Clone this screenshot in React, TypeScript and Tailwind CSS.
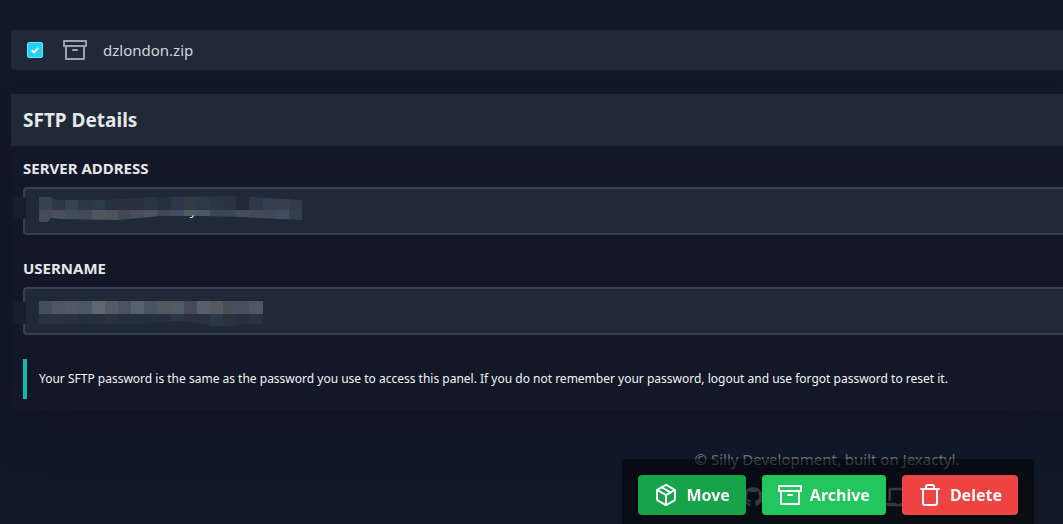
import type { ReactNode } from "react";
import { FiArchive, FiPackage, FiTrash } from "react-icons/fi";
import { FaGithub } from "react-icons/fa";

interface Mosaic {
  top: string[];
  bottom: string[];
  outline: string;
  patch: string;
  split: number;
  tail?: boolean;
}

const addressMosaic: Mosaic = {
  top: [
    "#364450", "#2f3644", "#36434f", "#2d3846", "#2d3b50", "#27323f", "#2a323e", "#29323d", "#2b3547", "#25323e",
    "#2e3649", "#323b43", "#2b394a", "#2b363f", "#2a3341", "#222a38", "#32364a", "#344154", "#383f50", "#323d47",
  ],
  bottom: [
    "#454b58", "#4b4f5c", "#414d5b", "#454a5a", "#4d5662", "#4b5559", "#454855", "#4a4e5a", "#4e5260", "#414850",
    "#454d65", "#4f5c60", "#4b5a60", "#3a475a", "#3c4953", "#414f60", "#474a55", "#3f4a58", "#434b60", "#333f49",
  ],
  outline: "M26 2H37L45 5H92L137 2L227 1L252 3L289 5V25L267 24L232 22L192 21H147L105 25L47 24L38 23L35 27H26Z",
  patch: "M0 2H13V24H9L0 22Z",
  split: 15,
  tail: true,
};

const usernameMosaic: Mosaic = {
  top: [
    "#43505c", "#4f5565", "#525867", "#4b5869", "#62666d", "#545b65", "#4c535f", "#585f6d", "#4a5263",
    "#53575f", "#505c64", "#44495c", "#575f6a", "#57585f", "#484f57", "#494f60", "#53565d",
  ],
  bottom: [
    "#2a333f", "#29343e", "#29303e", "#242f3d", "#252f3d", "#29323f", "#242f40", "#242f40", "#242f42",
    "#262f42", "#2b3748", "#2c3042", "#263142", "#283845", "#2a323b", "#28303f", "#293342",
  ],
  outline: "M26 6H250V29L235 29L215 31H200L188 29L175 27L160 26L150 28L120 29H26Z",
  patch: "M1 7H13V29H3L0 26V9Z",
  split: 19,
};

function Censored({ id, mosaic }: { id: string; mosaic: Mosaic }) {
  return (
    <svg aria-hidden="true" width="290" height="34" className="pointer-events-none absolute top-2 -left-2.5">
      <clipPath id={`${id}-clip`}>
        <path d={mosaic.outline} />
      </clipPath>
      <path d={mosaic.patch} fill="#182030" />
      <g clipPath={`url(#${id}-clip)`} shapeRendering="crispEdges">
        {mosaic.top.map((fill, i) => (
          <rect key={i} x={26 + i * 13.15} y="0" width="14" height={mosaic.split} fill={fill} />
        ))}
        {mosaic.bottom.map((fill, i) => (
          <rect key={i} x={26 + i * 13.15} y={mosaic.split} width="14" height="16" fill={fill} />
        ))}
      </g>
      {mosaic.tail && <path d="M177 22.5H179L180.5 20.5" fill="none" stroke="#e5e7eb" strokeWidth="1.2" />}
    </svg>
  );
}

function Field({ id, label, mosaic }: { id: string; label: string; mosaic: Mosaic }) {
  return (
    <div>
      <label htmlFor={id} className="block text-[15px] leading-[18px] font-bold text-gray-200 uppercase">
        {label}
      </label>
      <div className="relative mt-2.5">
        <input
          id={id}
          type="text"
          readOnly
          className="block h-12 w-full rounded-l border-2 border-r-0 border-[#374151] bg-[#1f2937] px-3.5 text-[15px] text-gray-200 outline-none"
        />
        <Censored id={id} mosaic={mosaic} />
      </div>
    </div>
  );
}

function ActionButton({ icon, color, children }: { icon: ReactNode; color: string; children: ReactNode }) {
  return (
    <button type="button" className={`flex h-10 items-center gap-2 rounded px-4 text-base font-bold text-gray-50 ${color}`}>
      {icon}
      {children}
    </button>
  );
}

export default function App() {
  return (
    <div className="relative min-h-screen overflow-hidden bg-[#111827] pt-[30px] pl-[11px] font-['Noto_Sans',sans-serif] text-gray-200">
      <div className="flex h-10 items-center rounded-l bg-[#1f2937] pl-4">
        <span className="relative flex">
          <input
            id="file-dzlondon"
            type="checkbox"
            defaultChecked
            className="size-4 appearance-none rounded-xs border border-[#67e8f9] bg-[#22d3ee]"
          />
          <svg viewBox="0 0 16 16" className="pointer-events-none absolute inset-0 size-4">
            <path d="M4.8 8.2l2.2 2.2 4.2-4.4" fill="none" stroke="#fff" strokeWidth="2" />
          </svg>
        </span>
        <label htmlFor="file-dzlondon" className="flex items-center gap-4 pl-5 text-[15px] leading-5 text-gray-300">
          <FiArchive className="size-6 text-[#9ca3af]" />
          dzlondon.zip
        </label>
      </div>

      <section className="mt-6 rounded-l bg-[#121827] shadow-2xl">
        <h2 className="flex h-13 items-center bg-[#1f2937] px-3 text-[19px] leading-6 font-bold">SFTP Details</h2>
        <div className="pt-[13px] pb-3 pl-3">
          <div className="flex flex-col gap-6">
            <Field id="sftp-address" label="Server Address" mosaic={addressMosaic} />
            <Field id="sftp-username" label="Username" mosaic={usernameMosaic} />
            <div className="flex h-10 items-center border-l-4 border-[#14b8a6] pl-3">
              <p className="text-xs text-gray-100">
                Your SFTP password is the same as the password you use to access this panel. If you do not remember your
                password, logout and use forgot password to reset it.
              </p>
            </div>
          </div>
        </div>
      </section>

      <footer className="mt-9 mr-[29px] ml-auto flex w-[414px] flex-col items-center text-[#6b7280]">
        <p className="text-[15px] leading-6">© Silly Development, built on Jexactyl.</p>
        <div className="mt-4 flex w-[168px] items-center justify-between">
          <FaGithub className="size-5" />
          <svg viewBox="0 0 30 24" className="h-5 w-[25px]" fill="currentColor">
            <path d="M5 1h20a2 2 0 0 1 2 2v14h-3V4H6v13H3V3a2 2 0 0 1 2-2zM0 19h12l1 1h4l1-1h12v1a3 3 0 0 1-3 3H3a3 3 0 0 1-3-3z" />
          </svg>
        </div>
      </footer>

      <div className="fixed right-[29px] bottom-0 flex gap-4 rounded-t bg-black/50 px-4 pt-4 pb-[9px]">
        <ActionButton color="bg-[#16a34a]" icon={<FiPackage className="size-6" />}>
          Move
        </ActionButton>
        <ActionButton color="bg-[#22c55e]" icon={<FiArchive className="size-6" />}>
          Archive
        </ActionButton>
        <ActionButton color="bg-[#ef4444]" icon={<FiTrash className="size-6" />}>
          Delete
        </ActionButton>
      </div>
    </div>
  );
}
